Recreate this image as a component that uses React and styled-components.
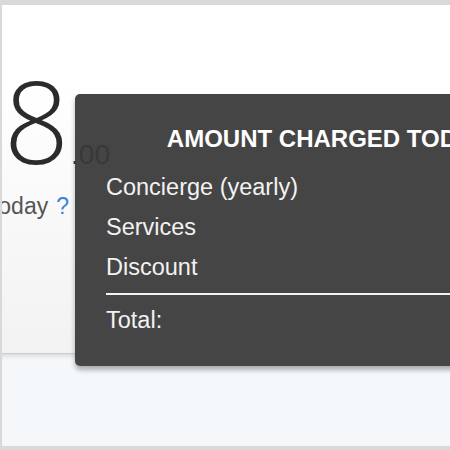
import React from "react";
import styled, { createGlobalStyle } from "styled-components";

const Global = createGlobalStyle`
  html, body { margin: 0; padding: 0; background: #d9d9d9; }
  body { font-family: "Liberation Sans", Arial, sans-serif; width: 450px; height: 450px; overflow: hidden; }
`;

const Frame = styled.div`
  position: relative;
  margin: 5px 0 0 2px;
  height: 441px;
  width: 600px;
  display: flex;
  flex-direction: column;
  overflow: hidden;
`;

const TopCard = styled.div`
  box-sizing: border-box;
  height: 349px;
  flex-shrink: 0;
  background: linear-gradient(#ffffff 0%, #ffffff 22%, #f2f2f2 100%);
  border-bottom: 1px solid #cdcdcd;
  padding-top: 58px;
`;

const Summary = styled.div`
  width: 108px;
  overflow: hidden;
  display: flex;
  flex-direction: column;
  align-items: flex-end;
`;

const AmountLine = styled.div`
  display: flex;
  align-items: baseline;
  white-space: nowrap;
  color: #2b2b2b;
`;

const BigNum = styled.span`
  font-family: "Open Sans", "Liberation Sans", sans-serif;
  font-weight: 300;
  font-size: 114px;
  line-height: 113px;
  letter-spacing: -1px;
`;

const Cents = styled.span`
  position: relative;
  z-index: 2;
  font-family: "Liberation Sans", Arial, sans-serif;
  font-size: 28px;
  color: #383838;
  margin-left: 3px;
`;

const Label = styled.div`
  white-space: nowrap;
  font-size: 23px;
  color: #555;
  padding-right: 41px;
  margin-top: 17px;
`;

const Help = styled.span`
  color: #3b84db;
  margin-left: 8px;
`;

const Lower = styled.div`
  flex: 1;
  background: #f4f8fb;
  box-shadow: inset 0 5px 5px -3px rgba(0, 0, 0, 0.12);
`;

const Tooltip = styled.div`
  position: absolute;
  z-index: 1;
  left: 73px;
  top: 89px;
  width: 490px;
  box-sizing: border-box;
  padding: 31px 30px 26px 31px;
  background: #454545;
  border-radius: 5px;
  box-shadow: 0 4px 5px rgba(0, 0, 0, 0.3);
  color: #f2f2f2;
`;

const Title = styled.div`
  text-align: center;
  font-weight: bold;
  font-size: 24px;
  line-height: 28px;
  color: #fff;
  padding-left: 14px;
  margin-bottom: 14px;
`;

const Row = styled.div`
  display: flex;
  justify-content: space-between;
  font-size: 23.5px;
  line-height: 40px;
`;

const Rule = styled.div`
  height: 2px;
  background: #f4f4f4;
  margin: 6px 0 5px;
`;

export default function App() {
  return (
    <>
      <Global />
      <Frame>
        <TopCard>
          <Summary>
            <AmountLine>
              <BigNum>$298</BigNum>
              <Cents>.00</Cents>
            </AmountLine>
            <Label>
              Charged today<Help>?</Help>
            </Label>
          </Summary>
        </TopCard>
        <Lower />
        <Tooltip>
          <Title>AMOUNT CHARGED TODAY</Title>
          <Row><span>Concierge (yearly)</span><span>$299.00</span></Row>
          <Row><span>Services</span><span>$0.00</span></Row>
          <Row><span>Discount</span><span>-$1.00</span></Row>
          <Rule />
          <Row><span>Total:</span><span>$298.00</span></Row>
        </Tooltip>
      </Frame>
    </>
  );
}
